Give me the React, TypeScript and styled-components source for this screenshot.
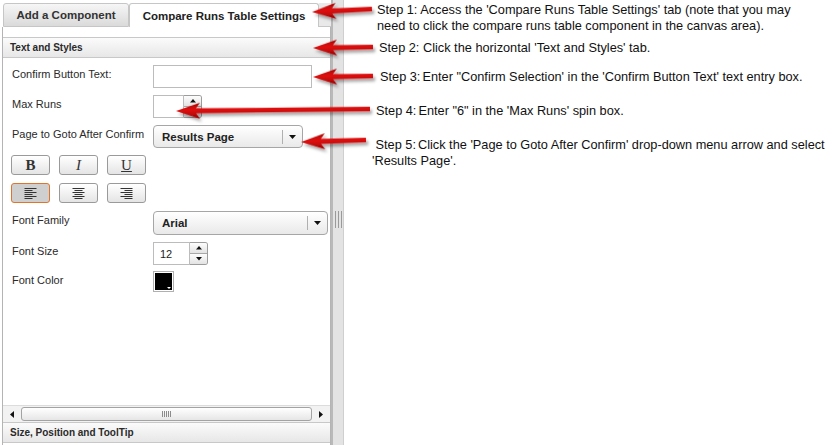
import React from 'react';
import styled, { createGlobalStyle, css } from 'styled-components';

const GlobalStyle = createGlobalStyle`
  html, body {
    margin: 0;
    padding: 0;
    background: #fff;
  }
  body {
    width: 839px;
    height: 445px;
    overflow: hidden;
    font-family: 'Liberation Sans', Arial, sans-serif;
  }
`;

const Page = styled.div`
  position: relative;
  display: flex;
  width: 839px;
  height: 445px;
  background: #fff;
`;

const SidePanel = styled.div`
  width: 331px;
  padding-left: 2px;
  box-sizing: border-box;
  display: flex;
  flex-direction: column;
  background: #fff;
`;

const TabBar = styled.div`
  display: flex;
  align-items: flex-end;
  height: 27px;
  padding-left: 1px;
  box-sizing: border-box;
`;

const Tab = styled.div<{ $active?: boolean; $width: number }>`
  width: ${(p) => p.$width}px;
  height: 24px;
  box-sizing: border-box;
  border: 1px solid #c6c6c6;
  border-bottom: none;
  border-radius: 3px 3px 0 0;
  font-size: 11.5px;
  font-weight: bold;
  color: #333;
  display: flex;
  align-items: center;
  justify-content: center;
  ${(p) =>
    p.$active
      ? css`
          background: #fff;
          color: #222;
        `
      : css`
          background: linear-gradient(#f6f6f6, #dadada);
          border-bottom: 1px solid #c6c6c6;
        `}
`;

const TabFiller = styled.div`
  flex: 1;
  height: 24px;
  background: #e9e9e9;
  border-bottom: 1px solid #c6c6c6;
  box-sizing: border-box;
`;

const Body = styled.div`
  flex: 1;
  display: flex;
  flex-direction: column;
  border-left: 1px solid #b4b4b4;
  border-right: 1px solid #b4b4b4;
  padding-top: 10px;
  background: #fff;
`;

const SectionHeader = styled.div`
  height: 21px;
  box-sizing: border-box;
  border-top: 1px solid #c8c8c8;
  border-bottom: 1px solid #c8c8c8;
  background: linear-gradient(#fbfbfb, #e7e7e7);
  padding-left: 7px;
  display: flex;
  align-items: center;
  font-size: 10px;
  font-weight: bold;
  color: #2a2a2a;
`;

const Form = styled.div`
  flex: 1;
  display: flex;
  flex-direction: column;
  padding: 7px 0 0 7px;
`;

const Row = styled.div<{ $gap?: number }>`
  display: flex;
  align-items: flex-start;
  margin-bottom: ${(p) => p.$gap ?? 7}px;
`;

const Label = styled.div`
  width: 143px;
  padding: 3px 0 0 2px;
  box-sizing: border-box;
  font-size: 11px;
  color: #2a2a2a;
`;

const TextBox = styled.div<{ $width: number }>`
  width: ${(p) => p.$width}px;
  height: 23px;
  box-sizing: border-box;
  border: 1px solid #bcbcbc;
  background: #fff;
  font-size: 11px;
  color: #222;
  display: flex;
  align-items: center;
  padding-left: 6px;
`;

const Spin = styled.div`
  display: flex;
  height: 23px;
`;

const SpinButtons = styled.div`
  width: 18px;
  display: flex;
  flex-direction: column;
  border: 1px solid #9c9c9c;
  border-left: none;
  border-radius: 0 3px 3px 0;
  box-sizing: border-box;
  overflow: hidden;
`;

const SpinStep = styled.div<{ $down?: boolean }>`
  flex: 1;
  display: flex;
  align-items: center;
  justify-content: center;
  background: linear-gradient(#fdfdfd, #e3e3e3);
  ${(p) => p.$down && 'border-top: 1px solid #a8a8a8;'}
`;

const Select = styled.div<{ $width: number; $height: number }>`
  width: ${(p) => p.$width}px;
  height: ${(p) => p.$height}px;
  box-sizing: border-box;
  border: 1px solid #a6a6a6;
  border-radius: 4px;
  background: linear-gradient(#ffffff, #e9e9e9);
  display: flex;
  align-items: center;
`;

const SelectValue = styled.div`
  flex: 1;
  padding-left: 8px;
  font-size: 11.5px;
  font-weight: bold;
  color: #222;
`;

const SelectArrow = styled.div`
  width: 19px;
  height: 14px;
  border-left: 1px solid #b0b0b0;
  display: flex;
  align-items: center;
  justify-content: center;
`;

const ButtonRow = styled.div<{ $gap?: number }>`
  display: flex;
  gap: 9px;
  padding-left: 1px;
  margin-bottom: ${(p) => p.$gap ?? 8}px;
`;

const FormatButton = styled.div<{ $active?: boolean }>`
  width: 39px;
  height: 20px;
  box-sizing: border-box;
  border: 1px solid ${(p) => (p.$active ? '#e0742a' : '#9a9a9a')};
  border-radius: 3px;
  background: ${(p) => (p.$active ? '#cfcfcf' : 'linear-gradient(#ffffff, #e4e4e4)')};
  display: flex;
  align-items: center;
  justify-content: center;
  font-family: 'Liberation Serif', 'Times New Roman', serif;
  font-size: 15px;
  color: #333;
`;

const Swatch = styled.div`
  position: relative;
  width: 21px;
  height: 21px;
  box-sizing: border-box;
  border: 1px solid #b0b0b0;
  padding: 1px;
  background: #fff;
`;

const SwatchFill = styled.div`
  width: 100%;
  height: 100%;
  background: #000;
`;

const SwatchCaret = styled.div`
  position: absolute;
  right: 2px;
  bottom: 2px;
  width: 0;
  height: 0;
  border-left: 2px solid transparent;
  border-right: 2px solid transparent;
  border-top: 2px solid #fff;
`;

const ScrollBar = styled.div`
  height: 16px;
  display: flex;
  align-items: stretch;
  background: #f2f2f2;
  border-top: 1px solid #dcdcdc;
`;

const ScrollStep = styled.div`
  width: 18px;
  display: flex;
  align-items: center;
  justify-content: center;
`;

const ScrollThumb = styled.div`
  flex: 1;
  margin: 1px 0;
  border: 1px solid #a3a3a3;
  border-radius: 3px;
  background: linear-gradient(#ffffff, #e6e6e6);
  display: flex;
  align-items: center;
  justify-content: center;
  gap: 1px;
`;

const GripLine = styled.span`
  width: 1px;
  height: 6px;
  background: #8c8c8c;
`;

const Splitter = styled.div`
  width: 13px;
  box-sizing: border-box;
  border-left: 2px solid #b9b9b9;
  border-right: 1px solid #cfcfcf;
  background: #e3e3e3;
  display: flex;
  align-items: flex-start;
  justify-content: center;
  gap: 2px;
  padding-top: 211px;
`;

const SplitGrip = styled.span`
  width: 1px;
  height: 17px;
  background: #9a9a9a;
`;

const Notes = styled.div`
  flex: 1;
  padding-top: 2px;
  font-size: 12.75px;
  line-height: 16px;
  color: #111;
`;

const Note = styled.p<{ $top: number; $indent: number }>`
  margin: ${(p) => p.$top}px 0 0 0;
  padding-left: ${(p) => p.$indent}px;
  white-space: nowrap;
`;

const StepNo = styled.span`
  margin-right: 2px;
`;

const ArrowLayer = styled.svg`
  position: absolute;
  left: 0;
  top: 0;
  pointer-events: none;
`;

type ArrowProps = { tail: [number, number]; tip: [number, number] };

const Pointer: React.FC<ArrowProps> = ({ tail, tip }) => {
  const dx = tail[0] - tip[0];
  const dy = tail[1] - tip[1];
  const len = Math.hypot(dx, dy);
  const angle = (Math.atan2(dy, dx) * 180) / Math.PI;
  return (
    <g transform={`translate(${tip[0]} ${tip[1]}) rotate(${angle})`} filter="url(#arrowShadow)">
      <path
        d={`M0 0 L24 -8 L20 -2.4 L${len} -2.2 L${len} 2.2 L20 2.4 L24 8 Z`}
        fill="url(#arrowRed)"
      />
    </g>
  );
};

const ArrowTriangle: React.FC<{ dir: 'up' | 'down' | 'left' | 'right'; size?: number }> = ({
  dir,
  size = 7,
}) => {
  const pts = {
    up: '0,4 3.5,0 7,4',
    down: '0,0 7,0 3.5,4',
    left: '4,0 4,7 0,3.5',
    right: '0,0 0,7 4,3.5',
  }[dir];
  const w = dir === 'up' || dir === 'down' ? 7 : 4;
  const h = dir === 'up' || dir === 'down' ? 4 : 7;
  return (
    <svg width={(w * size) / 7} height={(h * size) / 7} viewBox={`0 0 ${w} ${h}`}>
      <polygon points={pts} fill="#111" />
    </svg>
  );
};

const AlignIcon: React.FC<{ align: 'left' | 'center' | 'right' }> = ({ align }) => {
  const widths = [12, 8, 12, 8, 12, 8];
  return (
    <svg width="13" height="11" viewBox="0 0 13 11">
      {widths.map((w, i) => {
        const x = align === 'left' ? 0.5 : align === 'right' ? 12.5 - w : (13 - w) / 2;
        return <rect key={i} x={x} y={i * 2} width={w} height="1" fill="#333" />;
      })}
    </svg>
  );
};

const SpinBox: React.FC<{ width: number; value?: string }> = ({ width, value }) => (
  <Spin>
    <TextBox $width={width}>{value}</TextBox>
    <SpinButtons>
      <SpinStep>
        <ArrowTriangle dir="up" size={6} />
      </SpinStep>
      <SpinStep $down>
        <ArrowTriangle dir="down" size={6} />
      </SpinStep>
    </SpinButtons>
  </Spin>
);

const Dropdown: React.FC<{ width: number; height?: number; value: string }> = ({
  width,
  height = 23,
  value,
}) => (
  <Select $width={width} $height={height}>
    <SelectValue>{value}</SelectValue>
    <SelectArrow>
      <ArrowTriangle dir="down" size={7} />
    </SelectArrow>
  </Select>
);

const App: React.FC = () => {
  const arrows: ArrowProps[] = [
    { tip: [312, 12], tail: [372, 9] },
    { tip: [313, 48], tail: [373, 47] },
    { tip: [313, 77], tail: [373, 76] },
    { tip: [176, 111], tail: [370, 109] },
    { tip: [301, 142], tail: [366, 140] },
  ];

  return (
    <>
      <GlobalStyle />
      <Page>
        <SidePanel>
          <TabBar>
            <Tab $width={126}>Add a Component</Tab>
            <Tab $active $width={190}>
              Compare Runs Table Settings
            </Tab>
            <TabFiller />
          </TabBar>
          <Body>
            <SectionHeader>Text and Styles</SectionHeader>
            <Form>
              <Row>
                <Label>Confirm Button Text:</Label>
                <TextBox $width={159} />
              </Row>
              <Row>
                <Label>Max Runs</Label>
                <SpinBox width={31} />
              </Row>
              <Row>
                <Label>Page to Goto After Confirm</Label>
                <Dropdown width={150} value="Results Page" />
              </Row>
              <ButtonRow>
                <FormatButton>
                  <b>B</b>
                </FormatButton>
                <FormatButton>
                  <i>I</i>
                </FormatButton>
                <FormatButton>
                  <u>U</u>
                </FormatButton>
              </ButtonRow>
              <ButtonRow>
                <FormatButton $active>
                  <AlignIcon align="left" />
                </FormatButton>
                <FormatButton>
                  <AlignIcon align="center" />
                </FormatButton>
                <FormatButton>
                  <AlignIcon align="right" />
                </FormatButton>
              </ButtonRow>
              <Row>
                <Label>Font Family</Label>
                <Dropdown width={175} height={24} value="Arial" />
              </Row>
              <Row $gap={6}>
                <Label>Font Size</Label>
                <SpinBox width={37} value="12" />
              </Row>
              <Row>
                <Label>Font Color</Label>
                <Swatch>
                  <SwatchFill />
                  <SwatchCaret />
                </Swatch>
              </Row>
            </Form>
            <ScrollBar>
              <ScrollStep>
                <ArrowTriangle dir="left" />
              </ScrollStep>
              <ScrollThumb>
                {[0, 1, 2, 3, 4].map((i) => (
                  <GripLine key={i} />
                ))}
              </ScrollThumb>
              <ScrollStep>
                <ArrowTriangle dir="right" />
              </ScrollStep>
            </ScrollBar>
            <SectionHeader>Size, Position and ToolTip</SectionHeader>
            <div style={{ height: 2 }} />
          </Body>
        </SidePanel>
        <Splitter>
          <SplitGrip />
          <SplitGrip />
          <SplitGrip />
        </Splitter>
        <Notes>
          <Note $top={0} $indent={33}>
            Step 1: Access the 'Compare Runs Table Settings' tab (note that you may
            <br />
            need to click the compare runs table component in the canvas area).
          </Note>
          <Note $top={6} $indent={35}>
            Step 2: Click the horizontal 'Text and Styles' tab.
          </Note>
          <Note $top={13} $indent={36}>
            <StepNo>Step 3:</StepNo>Enter "Confirm Selection' in the 'Confirm Button Text' text entry box.
          </Note>
          <Note $top={18} $indent={32}>
            <StepNo>Step 4:</StepNo>Enter "6" in the 'Max Runs' spin box.
          </Note>
          <Note $top={18} $indent={28}>
            &nbsp;<StepNo>Step 5:</StepNo>Click the 'Page to Goto After Confirm' drop-down menu arrow and select
            <br />
            'Results Page'.
          </Note>
        </Notes>
        <ArrowLayer width="839" height="445">
          <defs>
            <linearGradient id="arrowRed" x1="0" y1="-8" x2="0" y2="8" gradientUnits="userSpaceOnUse">
              <stop offset="0" stopColor="#a80000" />
              <stop offset="0.45" stopColor="#e01010" />
              <stop offset="1" stopColor="#9a0000" />
            </linearGradient>
            <filter id="arrowShadow" x="-20%" y="-100%" width="150%" height="300%">
              <feDropShadow dx="2" dy="3" stdDeviation="1.6" floodColor="#000" floodOpacity="0.35" />
            </filter>
          </defs>
          {arrows.map((a, i) => (
            <Pointer key={i} tip={a.tip} tail={a.tail} />
          ))}
        </ArrowLayer>
      </Page>
    </>
  );
};

export default App;
